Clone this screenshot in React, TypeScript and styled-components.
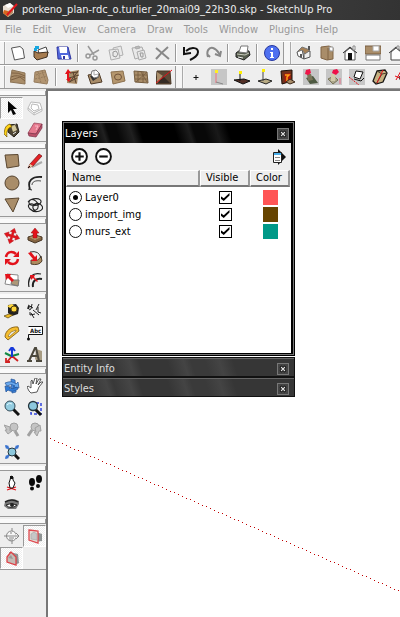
import React, { useState } from "react";
import styled, { createGlobalStyle } from "styled-components";

const Global = createGlobalStyle`
  * { box-sizing: border-box; }
  html, body, #root { height: 100%; }
  body {
    margin: 0;
    overflow: hidden;
    background: #fff;
    font-family: "DejaVu Sans Condensed", "DejaVu Sans", Tahoma, sans-serif;
    font-size: 11px;
    line-height: 16px;
  }
  button, input { font: inherit; margin: 0; padding: 0; border: 0; background: none; }
`;

const tan = "#a98d69";
const red = "#e3121b";

const icons: Record<string, React.ReactNode> = {
  app: (
    <>
      <path d="M1 4 8 1 12 4 12 11 6 15 1 11Z" fill="#e8ded2" />
      <path d="M2 8 6 9 6 15 1 11Z" fill="#d5691f" />
      <path d="M3 3 8 1 11 4 6 6Z" fill="#fff" />
      <path d="M6 9 11 7 11 11 6 15Z" fill="#b78d64" />
      <path d="M15 2 5 13" stroke="#e0161c" strokeWidth="2" />
    </>
  ),
  newFile: <path d="M1.500 3 10 1.500 13 4 14.500 13 4.500 15Z" fill="#fff" stroke="#555" />,
  open: (
    <>
      <path d="M5 5 13 2 15 8 7 12Z" fill="#fff" stroke="#444" />
      <path d="M1 6 5 8 15 7 14 12 4 15 1 12Z" fill="#a77d51" stroke="#403021" />
      <path d="M2 1h4v3H4v2H1V3h1Z" fill="#18a7e0" />
    </>
  ),
  save: (
    <>
      <path d="M1 2h11l3 12H2Z" fill="#5269dc" stroke="#3036a0" />
      <path d="M3 2h8v6H4Z" fill="#fff" />
      <path d="M5 10h7l1 4H6Z" fill="#fff" />
      <path d="M7 11h2v3H7Z" fill="#3036a0" />
    </>
  ),
  cut: (
    <g fill="none" stroke="#999" strokeWidth="1.500">
      <path d="M3 1 9 10M14 5 5 10" />
      <circle cx="3" cy="11" r="2" />
      <circle cx="10" cy="13" r="2" />
    </g>
  ),
  copy: (
    <g fill="#e9e9e9" stroke="#b0b0b0">
      <path d="M5 3 13 1 15 10 7 12Z" />
      <path d="M1 5 10 4 12 13 3 15Z" />
      <path d="M5 7 8 6 10 9 8 12 5 11Z" stroke="#999" />
    </g>
  ),
  paste: (
    <g fill="#e9e9e9" stroke="#aaa">
      <path d="M1 3 11 2 14 11 4 14Z" />
      <path d="M4 2 8 1 9 3 5 4Z" fill="#bbb" />
      <path d="M6 7 13 5 15 13 8 15Z" />
      <path d="M9 8 12 8 12 12 10 12Z" stroke="#999" />
    </g>
  ),
  remove: <path d="M2 3Q8 8 15 14M14 2Q7 8 2 14" stroke="#888" strokeWidth="2" fill="none" />,
  undo: (
    <>
      <path d="M3 6C9 1 15 3 15 7C15 11 11 13 7 15" fill="none" stroke="#111" strokeWidth="2" />
      <path d="M1 2 1 9 8 8" fill="none" stroke="#111" strokeWidth="2" />
    </>
  ),
  redo: (
    <>
      <path d="M2 12C0 6 3 2 7 3C11 4 12 7 14 10M4 12 2 10" fill="none" stroke="#888" strokeWidth="2" />
      <path d="M9 9 14 11 15 6" fill="none" stroke="#888" strokeWidth="2" />
    </>
  ),
  print: (
    <>
      <path d="M1 8 5 5 14 6 15 10 9 15 1 12Z" fill="#555b4c" stroke="#222" />
      <path d="M4 7 6 1 13 1 12 8Z" fill="#fff" stroke="#777" />
      <path d="M2 9 10 10 14 8" stroke="#c8cbbd" fill="none" />
      <path d="M3 12 8 13" stroke="#eee" />
    </>
  ),
  info: (
    <>
      <circle cx="8" cy="8" r="7.500" fill="#4e70f0" stroke="#2637a0" />
      <path d="M6 7h3v5h1v1H6v-1h1V8H6ZM7 3h2v2H7Z" fill="#fff" />
    </>
  ),
  iso: (
    <>
      <path d="M1 7 6 4 8 14 2 11Z" fill="#fff" stroke="#555" />
      <path d="M8 8 14 6 14 12 8 14Z" fill="#eee" stroke="#555" />
      <path d="M1 7 6 2 14 5 9 9 6 5Z" fill="#a78156" stroke="#777" />
      <path d="M4 9 6 9 6 13 4 12ZM12 1h2v4h-2Z" fill="#555" />
    </>
  ),
  box: (
    <>
      <path d="M2 2 10 1 14 3 14 14 8 15 2 13Z" fill={tan} stroke="#806445" />
      <path d="M9 3V15" stroke="#806445" />
      <path d="M10 2h4v4h-3Z" fill="#fff" stroke="#999" />
    </>
  ),
  house: (
    <>
      <path d="M3 7V15H13V7L8 3Z" fill="#fff" stroke="#555" />
      <path d="M1 8 8 2 15 8" fill="none" stroke="#333" />
      <path d="M6 8h4v7H6Z" fill="#111" />
      <path d="M11 1h2v4h-2Z" fill="#fff" stroke="#888" />
    </>
  ),
  top: (
    <>
      <path d="M0 1h16v8H0Z" fill={tan} stroke="#765c40" />
      <path d="M1 10h14v5H1Z" fill="#fff" stroke="#777" />
      <path d="M8 1h6v5H8Z" fill="#fff" stroke="#aaa" />
    </>
  ),
  outline: (
    <>
      <path d="M3 7V15H13V7L8 3Z" fill="#fff" stroke="#444" />
      <path d="M1 8 8 2 15 8" fill="none" stroke="#444" />
      <path d="M9 1h2v3H9Z" fill="#fff" stroke="#888" />
    </>
  ),
  contours: (
    <>
      <path d="M2 1 15 4 15 15 0 13Z" fill={tan} stroke="#8b7355" />
      <path d="M2 4Q8 3 15 7M1 8Q7 5 15 9M1 11 10 8 15 12" fill="none" stroke="#7f6244" />
    </>
  ),
  scratch: (
    <>
      <path d="M2 3 12 1 15 11 14 15 1 13Z" fill="#b29571" stroke="#957b5d" />
      <path d="M3 6 13 3M2 10 14 7M5 3 8 14M9 2 13 13" stroke="#957a5b" strokeDasharray="2 1" />
    </>
  ),
  smoove: (
    <>
      <path d="M3 3 15 1 13 15 3 14Z" fill={tan} />
      <path d="M6 4 14 3M5 9 15 6M5 13 13 9M9 3 12 14M14 2 6 13" stroke="#5b432e" />
      <path d="M4 0 7 4H5V9H7L5 13 2 10H3V5H1Z" fill={red} />
    </>
  ),
  stamp: (
    <>
      <path d="M1 6 12 4 15 13 4 15Z" fill={tan} stroke="#4f3b27" />
      <path d="M3 7 9 5 12 8 6 12Z" fill="#333" />
      <path d="M5 2 9 1 12 4 11 8 7 9 4 6Z" fill="#fff" stroke="#777" />
      <path d="M7 2V6L11 5" fill="none" stroke="#aaa" />
    </>
  ),
  drape: (
    <>
      <path d="M1 3 13 2 15 12 3 15Z" fill="#b5976e" stroke="#8b704e" />
      <ellipse cx="8" cy="8" rx="3.500" ry="3" fill="none" stroke="#72543a" />
    </>
  ),
  detail: (
    <>
      <path d="M1 2 14 3 15 14 2 13Z" fill={tan} stroke="#735c3f" />
      <path d="M2 6 14 6M2 10 15 10M5 2 5 13M10 3 10 14M14 3 3 13M8 3 14 13" stroke="#745a3d" strokeWidth=".8" />
    </>
  ),
  flip: (
    <>
      <path d="M1 2H14L15 15H0Z" fill="#5d4936" stroke="#493725" />
      <path d="M1 3 7 7 1 14Z" fill={tan} />
      <path d="M7 7 14 14H2Z" fill="#342b24" />
      <path d="M16 1 0 14" stroke={red} />
    </>
  ),
  plus: <path d="M8 6v5M5.500 8.500h5" stroke="#111" />,
  light1: (
    <>
      <path d="M0 0h16v16H0Z" fill="#c6c6c6" />
      <path d="M5 3V14" stroke="#ee7480" />
      <path d="M5 13 12 15" stroke="#888" />
      <path d="M4 1h3v3H4Z" fill="#ffee22" />
    </>
  ),
  light2: (
    <>
      <path d="M0 11 10 10 16 12 9 15Z" fill="#532f26" stroke="#111" />
      <path d="M6 4V12" stroke="#111" />
      <path d="M5 2h3v3H5Z" fill="#ffef00" />
    </>
  ),
  light3: (
    <>
      <path d="M1 12 9 10 15 12 9 15Z" fill="#b8ab84" stroke="#222" />
      <path d="M6 2V12" stroke="#444" />
      <path d="M5 0h3v3H5Z" fill="#ffef00" />
    </>
  ),
  furnace: (
    <>
      <path d="M1 2 12 1 12 12 2 15Z" fill="#70321e" stroke="#1c1009" />
      <path d="M4 5 10 4 11 10 5 13Z" fill="#ad1b0a" />
      <path d="M5 6 9 6 7 8 7 12" fill="none" stroke="#ff9d19" strokeWidth="1.500" />
      <path d="M10 10 15 13 10 15 6 13Z" fill={tan} stroke="#3c291b" />
    </>
  ),
  redStamp: (
    <>
      <path d="M0 0h16v16H0Z" fill="#c6c6c6" />
      <path d="M3 9 10 7 15 14 7 15Z" fill="#4e5a42" />
      <path d="M4 5 8 5 10 11 5 12Z" fill="#7b7659" />
      <path d="M3 1 7 0 8 4 5 6 2 5Z" fill="#ee1648" />
    </>
  ),
  beigeStamp: (
    <>
      <path d="M0 0h16v16H0Z" fill="#c6c6c6" />
      <path d="M2 10 8 7 12 11 7 15Z" fill="#aaa58a" stroke="#797457" />
      <path d="M5 5 10 5 9 12 5 12Z" fill="#d1cbaa" />
      <path d="M7 1 11 0 13 3 10 6 6 4Z" fill="#ef1048" />
      <path d="M14 9V15" stroke="#e86b83" />
    </>
  ),
  plane: (
    <>
      <path d="M0 0h16v16H0Z" fill="#c6c6c6" />
      <path d="M7 2 14 3 11 10 5 8Z" fill="#fff" stroke="#111" />
      <path d="M5 10 12 12 15 9" fill="none" stroke="#111" />
      <path d="M0 8 10 16" stroke={red} strokeDasharray="2 1" />
    </>
  ),
  wrap: (
    <>
      <path d="M5 2 13 1 15 4 11 13 4 15 1 12Z" fill="#c5b181" stroke="#171512" strokeWidth="1.300" />
      <path d="M5 2 10 5 4 15M10 5 15 4" fill="none" stroke="#4b4030" />
      <path d="M11 1 5 14" stroke={red} />
    </>
  ),
  slice: (
    <>
      <path d="M4 8 13 3 15 12 7 15Z" fill="#aea67e" stroke="#222" />
      <path d="M1 11 7 0M0 7 15 13" stroke={red} />
    </>
  ),
  select: <path d="M4 1V13L7 10 9 15 12 14 9 9H13Z" fill="#050505" />,
  component: (
    <g fill="#fff" stroke="#bbb">
      <path d="M4 2 13 3 15 9 7 13 1 8Z" />
      <path d="M5 4 11 5 12 9 7 11 4 8ZM1 8 7 13V15L1 10ZM7 13 15 9V11L7 15" />
    </g>
  ),
  paint: (
    <>
      <path d="M5 3 13 2 15 10 10 15 4 10Z" fill="#4f4634" stroke="#26221b" />
      <path d="M7 4 11 3 13 8 9 10Z" fill="#d3c89c" />
      <path d="M8 1 12 2M9 12 12 10" stroke="#eee" />
      <path d="M6 2C0 4 1 8 0 12L3 15C2 10 4 5 8 5Z" fill="#ffd217" stroke="#6f5300" strokeWidth=".7" />
    </>
  ),
  eraser: (
    <>
      <path d="M7 1 15 2 9 12 1 11Z" fill="#e5798e" stroke="#913d52" strokeWidth=".7" />
      <path d="M1 11 9 12 15 2V6L9 15 2 14Z" fill="#bc526a" stroke="#7b3148" strokeWidth=".7" />
      <path d="M8 4 11 4 9 8" fill="none" stroke="#f9bcc7" />
    </>
  ),
  rect: <path d="M1 2 14 1.500 15 13 3 15Z" fill={tan} stroke="#594630" />,
  pencil: (
    <>
      <path d="M5 14 15 9" stroke="#aaa" strokeWidth="2" />
      <path d="M3 11 12 1 15 3 6 13 1 15Z" fill="#e42024" stroke="#6f1416" strokeWidth=".7" />
      <path d="M3 11 6 13 1 15Z" fill="#ead2a6" />
      <path d="M1 15 3 13" stroke="#111" />
    </>
  ),
  circle: <circle cx="8" cy="8" r="7" fill={tan} stroke="#55432f" />,
  arc: (
    <g fill="none" stroke="#222">
      <path d="M3 14C0 6 5 1 15 2" strokeWidth="1.800" />
      <path d="M5 10C5 7 8 5 14 6" strokeWidth=".8" />
      <path d="M1 14 5 15" />
    </g>
  ),
  polygon: <path d="M1 2 15 1 9 15Z" fill={tan} stroke="#594630" />,
  freehand: (
    <path
      d="M1 5C5 0 15 1 14 5S1 10 2 5 10 3 11 8 7 15 6 11 12 4 15 9 8 17 3 12 6 5 8 9"
      fill="none"
      stroke="#222"
      strokeWidth="1.100"
    />
  ),
  move: (
    <g transform="rotate(18 8 8)" fill={red}>
      <path d="M8 0 11 4 9 4 9 7 12 7 12 5 16 8 12 11 12 9 9 9 9 12 11 12 8 16 5 12 7 12 7 9 4 9 4 11 0 8 4 5 4 7 7 7 7 4 5 4Z" stroke="#b41219" strokeWidth=".5" />
    </g>
  ),
  push: (
    <>
      <path d="M1 9 8 7 15 9 15 12 8 15 1 12Z" fill="#866542" stroke="#453423" />
      <path d="M2 9 8 12 14 9 8 8Z" fill="#b79a70" />
      <path d="M8 0 12 5H10V10H6V5H4Z" fill={red} stroke="#8f1616" strokeWidth=".5" />
    </>
  ),
  rotate: (
    <>
      <path d="M2 7C3 1 9 1 12 4M14 9C13 15 7 15 4 12" fill="none" stroke={red} strokeWidth="2.500" />
      <path d="M15 1V7H9ZM1 15V9H7Z" fill={red} />
    </>
  ),
  follow: (
    <>
      <path d="M4 10Q12 12 14 6L15 11Q12 16 4 14Z" fill="#ae8b5e" stroke="#513f2c" />
      <path d="M3 2Q12 0 14 8" stroke="#333" fill="none" />
      <path d="M1 3 4 2 8 7 10 5 10 11 4 11 6 9Z" fill={red} />
    </>
  ),
  scale: (
    <>
      <path d="M3 2 14 3 14 14 1 12Z" fill="#fff" stroke="#888" />
      <path d="M8 8 15 8 14 14 7 12Z" fill="#ad9878" stroke="#777" />
      <path d="M1 2 7 2 6 4 10 8 8 10 4 6 2 8Z" fill={red} />
    </>
  ),
  offset: (
    <>
      <path d="M2 15C0 5 6 0 14 2" fill="none" stroke="#222" strokeWidth="1.200" />
      <path d="M6 15C5 9 9 6 15 7" fill="none" stroke="#222" strokeWidth="2" />
      <path d="M3 3 8 3 7 5 11 9 10 10 6 6 4 8Z" fill={red} />
    </>
  ),
  tape: (
    <>
      <path d="M4 2 12 1 15 5 14 11 8 13 4 10Z" fill="#222" />
      <path d="M3 3 8 1 10 3 6 5Z" fill="#ffd73c" />
      <circle cx="10" cy="6" r="3" fill="#ffd73c" stroke="#554411" />
      <path d="M5 11 0 13 4 15 9 12Z" fill="#f3be24" stroke="#524014" strokeWidth=".7" />
    </>
  ),
  dimension: (
    <g fill="none" stroke="#222">
      <path d="M1 2 6 5M5 1 4 6 2 7M11 4V9L14 10M12 1 9 7M6 7 12 12M4 10 7 15M3 9V12L8 11" />
      <path d="M2 3 1 6" strokeWidth="2" />
    </g>
  ),
  protractor: (
    <>
      <path d="M1 12C1 6 7 1 14 2L15 6 4 15Z" fill="#f5bd2e" stroke="#765411" strokeWidth=".8" />
      <path d="M4 11Q6 6 12 5L12 6 5 12Z" fill="#eee" stroke="#9a771e" strokeWidth=".8" />
    </>
  ),
  label: (
    <>
      <path d="M1.500 1.500H15.500V9.500H1.500V15" fill="#fff" stroke="#111" />
      <text x="3" y="8" fontSize="6" fontWeight="bold" fill="#111">Abc</text>
      <circle cx="1.500" cy="14" r="1.500" fill="#111" />
    </>
  ),
  axes: (
    <>
      <path d="M7 9 1 6M8 9 15 7" fill="none" stroke="#138843" strokeWidth="2" />
      <path d="M8 9 3 15M8 9 14 14M2 11 2 15 6 15" fill="none" stroke="#d12222" strokeWidth="1.800" />
      <path d="M8 10V1M5 4 8 0 11 4" fill="none" stroke="#1739da" strokeWidth="2" />
    </>
  ),
  text3d: (
    <>
      <path d="M9 2 15 4 15 13 11 15 8 12Z" fill="#a89c83" />
      <path d="M2 14 8 1 9 1 12 14M4 9 11 9M0 14H5M9 14H15" fill="none" stroke="#4b473c" strokeWidth="2" />
    </>
  ),
  orbit: (
    <>
      <path d="M7 1 11 2 12 14 8 15Z" fill="#438ce4" stroke="#235295" strokeWidth=".7" />
      <path d="M1 5Q8 2 12 6L14 4 15 10 9 9 11 8Q8 5 3 8Z" fill="#69a9ee" stroke="#235295" strokeWidth=".7" />
      <path d="M14 11Q8 15 4 12L2 14 1 8 7 9 5 10Q9 12 13 9Z" fill="#2e7bd8" stroke="#235295" strokeWidth=".7" />
    </>
  ),
  pan: <path d="M2 13 4 15 10 14 12 9 16 4 14 4 11 7 14 1 12 1 9 6 10 0 8 0 6 6 5 2 4 3 4 10 1 8 0 9Z" fill="#fff" stroke="#333" strokeWidth=".8" />,
  zoom: (
    <>
      <path d="M9 9 15 15" stroke="#111" strokeWidth="3" />
      <circle cx="6" cy="6" r="5" fill="#93cce0" stroke="#344c59" />
      <path d="M3 5Q5 2 8 4" stroke="#e2f9ff" fill="none" />
    </>
  ),
  zoomWindow: (
    <>
      <path d="M4 3H14V14H4Z" fill="none" stroke="#3143dc" strokeWidth="1.500" strokeDasharray="3 2" />
      <path d="M8 9 14 15" stroke="#111" strokeWidth="3" />
      <circle cx="6" cy="6" r="4.500" fill="#8dc8dd" stroke="#26363d" strokeWidth="1.300" />
    </>
  ),
  previous: (
    <g fill="#c4c4c4" stroke="#a0a0a0">
      <path d="M11 9 14 14" strokeWidth="3" />
      <circle cx="10" cy="5" r="4" />
      <path d="M0 3 6 5 6 9 8 9 4 12 1 8 3 8Z" />
    </g>
  ),
  next: (
    <g fill="#c4c4c4" stroke="#a0a0a0">
      <path d="M5 8 1 14" strokeWidth="3" />
      <circle cx="8" cy="5" r="4" />
      <path d="M13 3 14 9 12 9 10 14 7 10 9 10 8 6Z" />
    </g>
  ),
  extents: (
    <>
      <path d="M1 1 5 2 2 5ZM15 1 11 2 14 5ZM1 15 2 11 5 14Z" fill="#3973cf" />
      <path d="M2 2 5 5M14 2 11 5M2 14 5 11" stroke="#3973cf" strokeWidth="2" />
      <path d="M10 10 15 15" stroke="#111" strokeWidth="3" />
      <circle cx="8" cy="8" r="4" fill="#8dc8dd" stroke="#26363d" />
    </>
  ),
  camera: (
    <>
      <path d="M3 12 12 15M3 15 12 12" stroke={red} strokeWidth="1.300" />
      <path d="M7 1 9 2 9 5 11 8 9 13 6 13 5 8 6 5Z" fill="#fff" stroke="#111" />
      <path d="M6 1h3v3H6Z" fill="#111" />
    </>
  ),
  walk: (
    <g fill="#080808">
      <ellipse cx="5" cy="7" rx="3" ry="4" />
      <ellipse cx="12" cy="4" rx="3" ry="4" />
      <ellipse cx="5" cy="13.500" rx="2" ry="2" />
      <ellipse cx="11" cy="11" rx="2" ry="2" />
    </g>
  ),
  look: (
    <>
      <path d="M1 5Q8 0 15 4L15 7 12 12 4 12 0 9Z" fill="#777" />
      <path d="M2 8Q7 5 13 8Q7 13 2 8Z" fill="#fff" stroke="#222" />
      <circle cx="8" cy="8" r="2" fill="#222" />
      <path d="M1 5Q8 1 14 5" fill="none" stroke="#222" strokeWidth="1.500" />
    </>
  ),
  section: (
    <g fill="#f7f7f7" stroke="#888">
      <path d="M8 0V3M8 13V16" />
      <circle cx="7.500" cy="8" r="5" />
      <path d="M0 8H15M12 5 15 8 12 11M7 4V6M5 10H10M5 12H9" />
    </g>
  ),
  sectionPlane: (
    <>
      <path d="M9 4 15 6 15 13 8 14Z" fill="#8f9494" />
      <path d="M2 2 11 3 11 15 2 12Z" fill="#e7dfd8" stroke="#df4a50" strokeWidth="1.300" />
      <path d="M4 6 7 4 10 6V12L4 11Z" fill="#c6c6c6" stroke="#aaa" strokeWidth=".7" />
    </>
  ),
  sectionCut: (
    <>
      <path d="M5 2 14 4 15 13 11 15 6 11Z" fill="#8e9696" />
      <path d="M3 7 7 2 12 7V15L3 12Z" fill="#c5bcb5" stroke="#dd4147" strokeWidth="1.300" />
      <path d="M4 8 7 5 9 9" fill="#999" />
    </>
  ),
  addLayer: (
    <>
      <circle cx="8" cy="8" r="7" fill="#fff" stroke="#111" strokeWidth="1.800" />
      <path d="M8 4v8M4 8h8" stroke="#111" strokeWidth="2" />
    </>
  ),
  removeLayer: (
    <>
      <circle cx="8" cy="8" r="7" fill="#fff" stroke="#111" strokeWidth="1.800" />
      <path d="M4 8h8" stroke="#111" strokeWidth="2" />
    </>
  ),
  details: (
    <>
      <path d="M7 0 15 8 7 16Z" fill="#111" />
      <path d="M2.500 3.500h8v10h-8Z" fill="#fff" stroke="#222" />
      <path d="M3 4h7v2H3Z" fill="#49b0ec" />
      <path d="M4 8.500h5M4 11.500h5" stroke="#888" />
    </>
  ),
  close: (
    <>
      <path d="M3 3 13 13M13 3 3 13" stroke="#000" strokeWidth="5" />
      <path d="M4 4 12 12M12 4 4 12" stroke="#ddd" strokeWidth="2.500" />
    </>
  ),
};

const Glyph = styled.svg<{ $size?: number }>`
  display: block;
  flex: none;
  width: ${(p) => p.$size ?? 16}px;
  height: ${(p) => p.$size ?? 16}px;
`;

const Icon = ({ name, size }: { name: string; size?: number }) => (
  <Glyph viewBox="0 0 16 16" $size={size} aria-hidden="true">{icons[name]}</Glyph>
);

const AppFrame = styled.div`
  display: flex;
  flex-direction: column;
  height: 100vh;
  background: #eee;
`;

const TitleBar = styled.header`
  display: flex;
  align-items: center;
  flex: none;
  gap: 4px;
  height: 20px;
  padding: 0 2px;
  overflow: hidden;
  white-space: nowrap;
  color: #eee;
  background: linear-gradient(100deg, #343434 0 40%, #3c3c3c 48%, #303030 60%, #3b3b3b 75%, #333);
`;

const MenuBar = styled.nav`
  display: flex;
  flex: none;
  height: 21px;
  padding-bottom: 1px;
  border-bottom: 1px solid #d7d7d7;
`;

const MenuItem = styled.button`
  flex: none;
  padding: 0 6px 0 5px;
  color: #999;
`;

const ToolStrip = styled.div`
  display: flex;
  align-items: center;
  flex: none;
  height: 24px;
  overflow: hidden;
  border-top: 1px solid #fff;
  border-bottom: 1px solid #999;
`;

const ToolButton = styled.button<{ $pressed?: boolean }>`
  display: flex;
  align-items: center;
  justify-content: center;
  flex: none;
  width: 23px;
  height: 22px;
  border: 1px solid;
  border-color: ${(p) => (p.$pressed ? "#999 #fff #fff #999" : "transparent")};
  background: ${(p) => (p.$pressed ? "repeating-conic-gradient(#fff 0 25%, #eee 0 50%) 0 0 / 2px 2px" : "none")};
`;

const Separator = styled.span<{ $wide?: boolean }>`
  flex: none;
  width: 2px;
  height: 18px;
  margin: 0 ${(p) => (p.$wide ? 3 : 2)}px;
  border-left: 1px solid #999;
  border-right: 1px solid #fff;
`;

const StripEnd = styled.span<{ $first?: boolean }>`
  flex: none;
  align-self: stretch;
  width: ${(p) => (p.$first ? 6 : 9)}px;
  border-left: ${(p) => (p.$first ? 0 : 1)}px solid #999;
  background: linear-gradient(#aaa, #aaa) ${(p) => (p.$first ? 4 : 6)}px 0 / 1px 100% no-repeat, #f5f5f5;
`;

const Workspace = styled.div`
  display: flex;
  flex: 1;
  min-height: 0;
`;

const Sidebar = styled.aside`
  flex: none;
  width: 48px;
  border-right: 2px solid #777;
  background: #eee;
`;

const ToolGroup = styled.div`
  display: grid;
  grid-template-columns: 23px 23px;
  grid-template-rows: 8px;
  grid-auto-rows: 22px;
  border-bottom: 1px solid #999;

  &::before {
    content: "";
    grid-column: 1 / -1;
    height: 4px;
    margin-top: 2px;
    border: solid #999;
    border-width: 0 1px 1px 0;
    background: #fafafa;
  }
`;

const Canvas = styled.main`
  position: relative;
  flex: 1;
  min-width: 0;
  overflow: hidden;
  border-top: 2px solid #777;
  background: #fff;
`;

const GuideLine = styled.svg`
  position: absolute;
  inset: 0;
  width: 100%;
  height: 100%;
`;

const PanelStack = styled.div`
  position: absolute;
  top: 30px;
  left: 14px;
  width: 233px;
`;

const Panel = styled.section`
  display: flex;
  flex-direction: column;
  height: 235px;
  margin-bottom: 1px;
  border: 1px solid #000;
  outline: 1px solid #777;
  outline-offset: -2px;
  padding: 1px 3px 2px 2px;
  background: #000;
`;

const PanelTitle = styled.h2`
  display: flex;
  align-items: center;
  justify-content: space-between;
  flex: none;
  height: 20px;
  margin: 0;
  padding-top: 2px;
  font-size: 11px;
  font-weight: 400;
  color: #fff;
  background: linear-gradient(72deg, #000 0 12%, #202020 18%, #080808 20% 24%, #202020 30%, #000 34% 49%, #1c1c1c 55%, #080808 57% 62%, #191919 67%, #000 72%);
`;

const CloseButton = styled.button`
  display: flex;
  align-items: center;
  justify-content: center;
  width: 12px;
  height: 12px;
  margin-right: 2px;
  border: 1px solid #777;
  background: #444;
`;

const PanelTools = styled.div`
  display: flex;
  align-items: center;
  flex: none;
  gap: 7px;
  height: 27px;
  padding: 0 4px 0 6px;
  background: #eee;
`;

const PanelTool = styled.button`
  &:last-child { margin-left: auto; }
`;

const PanelBody = styled.div`
  flex: 1;
  margin-left: 1px;
  padding-right: 1px;
  background: #fff;
`;

const LayerTable = styled.table`
  width: 100%;
  table-layout: fixed;
  border-collapse: separate;
  border-spacing: 0;
`;

const LayerRows = styled.tbody`
  &::before {
    content: "";
    display: block;
    height: 2px;
  }
`;

const HeadCell = styled.th<{ $width?: number }>`
  width: ${(p) => (p.$width ? `${p.$width}px` : "auto")};
  height: 17px;
  padding: 0 0 0 5px;
  border: solid;
  border-width: 1px 2px 2px 1px;
  border-color: #fff #999 #777 #fff;
  background: #eee;
  font-weight: 400;
  line-height: 14px;
  text-align: left;
  color: #000;
`;

const Cell = styled.td<{ $lead?: boolean }>`
  height: 17px;
  padding: ${(p) => (p.$lead ? "0 0 0 3px" : "0")};
  line-height: 16px;
  color: #000;
`;

const CellContent = styled.label<{ $center?: boolean }>`
  display: flex;
  align-items: center;
  justify-content: ${(p) => (p.$center ? "center" : "flex-start")};
  gap: 3px;
`;

const Radio = styled.input`
  appearance: none;
  display: grid;
  place-items: center;
  width: 13px;
  height: 13px;
  border: 1px solid #111;
  border-radius: 50%;
  background: #fff;
  &:checked::before {
    content: "";
    width: 5px;
    height: 5px;
    border-radius: 50%;
    background: #000;
  }
`;

const Check = styled.input`
  appearance: none;
  width: 13px;
  height: 13px;
  border: 1px solid #000;
  background: #fff;
  &:checked::before {
    content: "";
    display: block;
    width: 9px;
    height: 8px;
    margin: 1px;
    background: #000;
    clip-path: polygon(0 38%, 36% 66%, 100% 0, 100% 32%, 36% 100%, 0 68%);
  }
`;

const Swatch = styled.button<{ $color: string }>`
  display: block;
  width: 15px;
  height: 15px;
  margin: 0 auto;
  background: ${(p) => p.$color};
`;

const CollapsedPanel = styled.section`
  display: flex;
  align-items: center;
  justify-content: space-between;
  height: 20px;
  padding: 3px 3px 0 1px;
  border: 1px solid #111;
  box-shadow: inset 0 1px #666;
  color: #ddd;
  background: linear-gradient(72deg, #363636 0 12%, #454545 20%, #383838 23%, #454545 30%, #363636 34% 46%, #444 53%, #3a3a3a 56% 62%, #444 68%, #363636 74%);
`;

type Tool = { icon: string; name: string };
const tool = (icon: string, name: string): Tool => ({ icon, name });

const standardTools: Tool[][] = [
  [tool("newFile", "New"), tool("open", "Open"), tool("save", "Save")],
  [tool("cut", "Cut"), tool("copy", "Copy"), tool("paste", "Paste"), tool("remove", "Erase")],
  [tool("undo", "Undo"), tool("redo", "Redo")],
  [tool("print", "Print")],
  [tool("info", "Model Info")],
];
const viewTools = [tool("iso", "Iso"), tool("box", "Top"), tool("house", "Front"), tool("top", "Right"), tool("outline", "Back")];
const sandboxTools: Tool[][] = [
  [tool("contours", "From Contours"), tool("scratch", "From Scratch")],
  [tool("smoove", "Smoove"), tool("stamp", "Stamp"), tool("drape", "Drape"), tool("detail", "Add Detail"), tool("flip", "Flip Edge")],
];
const pluginTools = [
  tool("plus", "Point"), tool("light1", "Line"), tool("light2", "Dark Base"), tool("light3", "Light Base"),
  tool("furnace", "Face"), tool("redStamp", "Extrude"), tool("beigeStamp", "Solid"), tool("plane", "Plane"),
  tool("wrap", "Wrap"), tool("slice", "Slice"),
];
const sideTools: Tool[][] = [
  [tool("select", "Select"), tool("component", "Make Component"), tool("paint", "Paint Bucket"), tool("eraser", "Eraser")],
  [tool("rect", "Rectangle"), tool("pencil", "Line"), tool("circle", "Circle"), tool("arc", "Arc"), tool("polygon", "Polygon"), tool("freehand", "Freehand")],
  [tool("move", "Move"), tool("push", "Push/Pull"), tool("rotate", "Rotate"), tool("follow", "Follow Me"), tool("scale", "Scale"), tool("offset", "Offset")],
  [tool("tape", "Tape Measure"), tool("dimension", "Dimension"), tool("protractor", "Protractor"), tool("label", "Text"), tool("axes", "Axes"), tool("text3d", "3D Text")],
  [tool("orbit", "Orbit"), tool("pan", "Pan"), tool("zoom", "Zoom"), tool("zoomWindow", "Zoom Window"), tool("previous", "Previous"), tool("next", "Next"), tool("extents", "Zoom Extents")],
  [tool("camera", "Position Camera"), tool("walk", "Walk"), tool("look", "Look Around")],
  [tool("section", "Section Plane"), tool("sectionPlane", "Display Section Planes"), tool("sectionCut", "Display Section Cuts")],
];
const pressedTools = ["select", "sectionPlane", "sectionCut"];
const menus = ["File", "Edit", "View", "Camera", "Draw", "Tools", "Window", "Plugins", "Help"];
const layers = [
  { name: "Layer0", color: "#ff5555" },
  { name: "import_img", color: "#664400" },
  { name: "murs_ext", color: "#009988" },
];

// One-pixel dots every four pixels, falling 7px for each 16px travelled.
const guidePath = Array.from({ length: 400 }, (_, i) => `M${2 + i * 4} ${Math.round(347 + i * 1.75) + 0.5}h1`).join("");

const Tools = ({ items }: { items: Tool[] }) => (
  <>
    {items.map((t) => (
      <ToolButton key={t.icon} aria-label={t.name} $pressed={pressedTools.includes(t.icon)}>
        <Icon name={t.icon} />
      </ToolButton>
    ))}
  </>
);

const Groups = ({ groups, wide }: { groups: Tool[][]; wide?: boolean }) => (
  <>
    {groups.map((group, i) => (
      <React.Fragment key={group[0].icon}>
        {i > 0 && <Separator $wide={wide} />}
        <Tools items={group} />
      </React.Fragment>
    ))}
  </>
);

function LayersPanel() {
  const [active, setActive] = useState("Layer0");
  const [hidden, setHidden] = useState<string[]>([]);
  const toggle = (name: string) =>
    setHidden((h) => (h.includes(name) ? h.filter((n) => n !== name) : [...h, name]));

  return (
    <Panel>
      <PanelTitle>
        Layers
        <CloseButton aria-label="Close Layers"><Icon name="close" size={8} /></CloseButton>
      </PanelTitle>
      <PanelTools>
        <PanelTool aria-label="Add layer"><Icon name="addLayer" size={17} /></PanelTool>
        <PanelTool aria-label="Remove layer"><Icon name="removeLayer" size={17} /></PanelTool>
        <PanelTool aria-label="Details"><Icon name="details" /></PanelTool>
      </PanelTools>
      <PanelBody>
        <LayerTable>
          <thead>
            <tr>
              <HeadCell>Name</HeadCell>
              <HeadCell $width={50}>Visible</HeadCell>
              <HeadCell $width={40}>Color</HeadCell>
            </tr>
          </thead>
          <LayerRows>
            {layers.map(({ name, color }) => (
              <tr key={name}>
                <Cell $lead>
                  <CellContent>
                    <Radio type="radio" name="layer" checked={active === name} onChange={() => setActive(name)} />
                    {name}
                  </CellContent>
                </Cell>
                <Cell>
                  <CellContent $center>
                    <Check type="checkbox" aria-label={`${name} visible`} checked={!hidden.includes(name)} onChange={() => toggle(name)} />
                  </CellContent>
                </Cell>
                <Cell><Swatch $color={color} aria-label={`${name} color`} /></Cell>
              </tr>
            ))}
          </LayerRows>
        </LayerTable>
      </PanelBody>
    </Panel>
  );
}

export default function App() {
  return (
    <AppFrame>
      <Global />
      <TitleBar>
        <Icon name="app" />
        porkeno_plan-rdc_o.turlier_20mai09_22h30.skp - SketchUp Pro
      </TitleBar>
      <MenuBar>
        {menus.map((m) => <MenuItem key={m}>{m}</MenuItem>)}
      </MenuBar>
      <ToolStrip>
        <StripEnd $first />
        <Groups groups={standardTools} />
        <StripEnd />
        <Tools items={viewTools} />
      </ToolStrip>
      <ToolStrip>
        <StripEnd $first />
        <Groups groups={sandboxTools} wide />
        <StripEnd />
        <Tools items={pluginTools} />
      </ToolStrip>
      <Workspace>
        <Sidebar>
          {sideTools.map((group) => (
            <ToolGroup key={group[0].icon}><Tools items={group} /></ToolGroup>
          ))}
        </Sidebar>
        <Canvas>
          <GuideLine aria-hidden="true">
            <path d={guidePath} stroke="#c00000" />
          </GuideLine>
          <PanelStack>
            <LayersPanel />
            {["Entity Info", "Styles"].map((title) => (
              <CollapsedPanel key={title}>
                {title}
                <CloseButton aria-label={`Close ${title}`}><Icon name="close" size={8} /></CloseButton>
              </CollapsedPanel>
            ))}
          </PanelStack>
        </Canvas>
      </Workspace>
    </AppFrame>
  );
}
